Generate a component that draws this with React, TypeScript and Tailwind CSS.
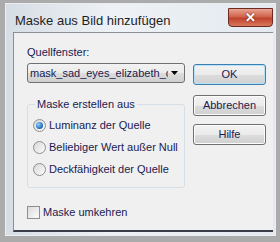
import React from "react";

const txt = "text-[#1a1a50]";

const Radio = ({ checked, label }: { checked?: boolean; label: string }) => (
  <div className="flex items-center h-[22px]">
    <span className="w-[13px] h-[13px] rounded-full border border-[#8f8f8f] bg-gradient-to-br from-[#d8d8d8] to-[#fbfbfb] flex items-center justify-center">
      {checked && (
        <span className="w-[7px] h-[7px] rounded-full bg-[radial-gradient(circle_at_35%_35%,#8fd0ff,#1b68b8_70%)]" />
      )}
    </span>
    <span className={`ml-[3px] ${txt}`}>{label}</span>
  </div>
);

const Btn = ({ label, def }: { label: string; def?: boolean }) => (
  <div
    className={`h-[21px] w-full rounded-[3px] border ${
      def ? "border-[#3c7fb1] shadow-[inset_0_0_0_1px_#b9e2f8]" : "border-[#707070] shadow-[inset_0_0_0_1px_#fcfcfc]"
    } bg-[linear-gradient(#f2f2f2_0%,#ebebeb_50%,#dddddd_51%,#cfcfcf_100%)] flex items-center justify-center ${txt}`}
  >
    {label}
  </div>
);

export default function App() {
  return (
    <div
      className="w-[280px] h-[242px] bg-[#ababab] pt-[3px] pl-[5px] pr-[4px] pb-[6px] overflow-hidden"
      style={{ fontFamily: '"Liberation Sans", Arial, sans-serif' }}
    >
      <div className="h-full bg-[linear-gradient(90deg,#d6dde4,#eef2f6_40%,#e3e9ef)] border border-[#e9eef3] flex flex-col">
        {/* title bar */}
        <div className="h-[28px] flex items-start">
          <div className="pl-[9px] pt-[7px] text-[13px] text-[#1e1e1e]">Maske aus Bild hinzufügen</div>
          <div className="ml-auto mt-[4px] mr-[2px] w-[45px] h-[19px] rounded-b-[4px] border border-[#6e2a20] bg-[linear-gradient(#e8a493,#d0634c_45%,#c0432c_55%,#d8785e)] flex items-center justify-center">
            <span className="text-white font-bold text-[13px] leading-none [text-shadow:0_0_2px_#5a1a10]">✕</span>
          </div>
        </div>
        {/* client */}
        <div className="flex-1 ml-[7px] mr-[2px] mb-[3px] bg-[#f0f0f0] border-l border-t border-[#8a8f96] border-b-2 border-b-[#3b3d4a] text-[11px] flex flex-col">
          <div className="flex items-start pl-[13px]">
            <div className="w-[158px] flex flex-col">
              <div className={`mt-[12px] h-[14px] leading-[14px] ${txt}`}>Quellfenster:</div>
              <div className="mt-[4px] h-[20px] rounded-[3px] border border-[#707070] bg-[linear-gradient(#f2f2f2_0%,#ebebeb_50%,#dddddd_51%,#cfcfcf_100%)] flex items-center pl-[2px] pr-[6px]">
                <span className={`flex-1 overflow-hidden whitespace-nowrap ${txt}`}>mask_sad_eyes_elizabeth_c</span>
                <svg width="7" height="4" viewBox="0 0 7 4" className="ml-[3px] shrink-0">
                  <path d="M0 0H7L3.5 4Z" fill="#000" />
                </svg>
              </div>
              <fieldset className="mt-[14px] border border-[#d5dfe5] rounded-[3px] pl-[5px] pb-[7px] pt-[3px]">
                <legend className={`ml-[2px] px-[2px] h-[14px] leading-[14px] ${txt}`}>Maske erstellen aus</legend>
                <Radio checked label="Luminanz der Quelle" />
                <Radio label="Beliebiger Wert außer Null" />
                <Radio label="Deckfähigkeit der Quelle" />
              </fieldset>
            </div>
            <div className="ml-[8px] w-[73px] mt-[31px] flex flex-col">
              <Btn label="OK" def />
              <div className="mt-[10px]">
                <Btn label="Abbrechen" />
              </div>
              <div className="mt-[8px]">
                <Btn label="Hilfe" />
              </div>
            </div>
          </div>
          <div className="mt-[17px] pl-[13px] flex items-center h-[14px]">
            <span className="w-[13px] h-[13px] border border-[#8f8f8f] bg-gradient-to-br from-[#dcdcdc] to-[#fbfbfb]" />
            <span className={`ml-[3px] ${txt}`}>Maske umkehren</span>
          </div>
        </div>
      </div>
    </div>
  );
}
